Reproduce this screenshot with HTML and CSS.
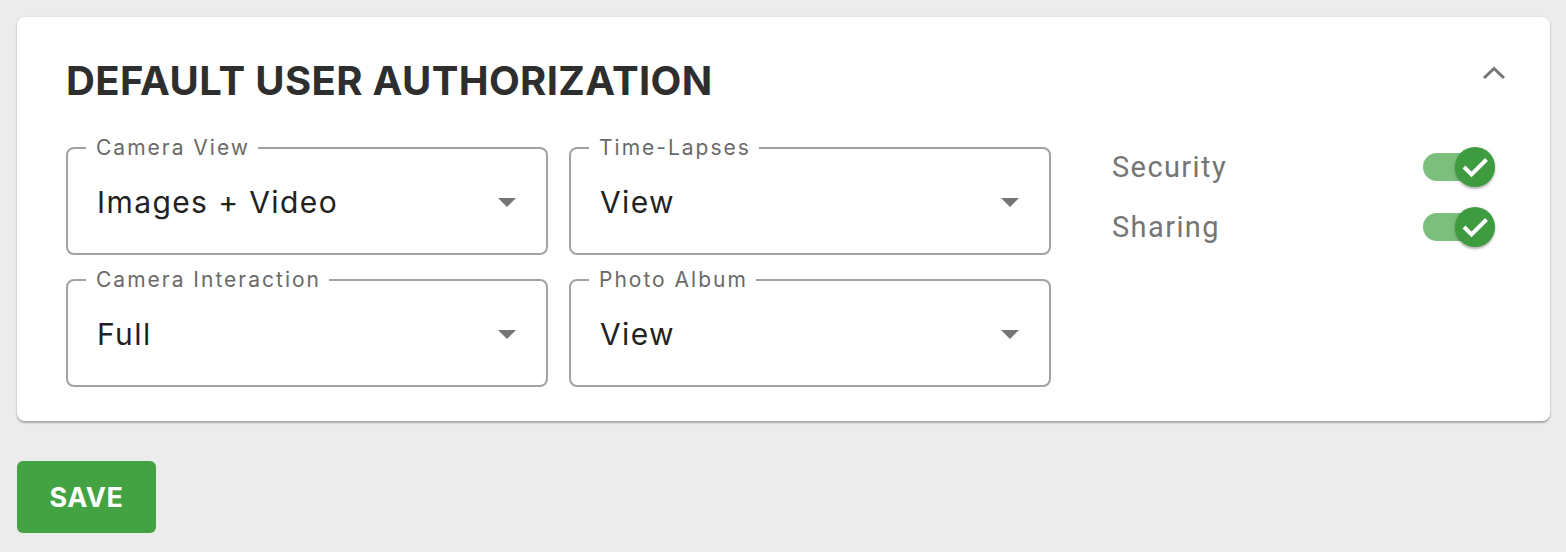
FILE: index.html
```html
<!DOCTYPE html>
<html lang="en">
<head>
<meta charset="utf-8">
<title>Default User Authorization</title>
<link rel="stylesheet" href="styles.css">
</head>
<body>
  <section class="card">
    <header class="card-header">
      <h1 class="card-title">DEFAULT USER AUTHORIZATION</h1>
      <button class="collapse-btn" aria-label="Collapse">
        <svg width="24" height="14" viewBox="0 0 24 14"><path d="M2 12 L12 2.5 L22 12" fill="none" stroke="#757575" stroke-width="3"/></svg>
      </button>
    </header>
    <div class="card-body">
      <div class="fields">
        <div class="field">
          <span class="field-label">Camera View</span>
          <span class="field-value">Images + Video</span>
          <span class="field-arrow"></span>
        </div>
        <div class="field">
          <span class="field-label">Time-Lapses</span>
          <span class="field-value">View</span>
          <span class="field-arrow"></span>
        </div>
        <div class="field">
          <span class="field-label">Camera Interaction</span>
          <span class="field-value">Full</span>
          <span class="field-arrow"></span>
        </div>
        <div class="field">
          <span class="field-label">Photo Album</span>
          <span class="field-value">View</span>
          <span class="field-arrow"></span>
        </div>
      </div>
      <div class="toggles">
        <div class="toggle-row">
          <span class="toggle-label">Security</span>
          <span class="switch">
            <span class="switch-track"></span>
            <span class="switch-thumb"><svg width="40" height="40" viewBox="0 0 40 40"><path d="M9 20 L16.5 27.5 L31.5 12.5" fill="none" stroke="#fff" stroke-width="4"/></svg></span>
          </span>
        </div>
        <div class="toggle-row">
          <span class="toggle-label">Sharing</span>
          <span class="switch">
            <span class="switch-track"></span>
            <span class="switch-thumb"><svg width="40" height="40" viewBox="0 0 40 40"><path d="M9 20 L16.5 27.5 L31.5 12.5" fill="none" stroke="#fff" stroke-width="4"/></svg></span>
          </span>
        </div>
      </div>
    </div>
  </section>
  <button class="save-btn">SAVE</button>
</body>
</html>
```

FILE: styles.css
```css
* { box-sizing: border-box; }

html, body {
  margin: 0;
  background: #ececec;
}

body {
  padding: 17px 16px 17px 17px;
  font-family: Inter, "Noto Sans", sans-serif;
}

.card {
  background: #fff;
  border-radius: 8px;
  box-shadow: 0 2px 2px rgba(0,0,0,0.28), 0 0 3px rgba(0,0,0,0.08);
  padding: 40px 44px 34px 49px;
}

.card-header {
  display: flex;
  justify-content: space-between;
  align-items: flex-start;
}

.card-title {
  margin: 0;
  font-size: 40px;
  line-height: 48px;
  font-weight: 700;
  color: #2e2e2e;
  letter-spacing: 0.35px;
}

.collapse-btn {
  margin-top: 9px;
  padding: 0;
  border: 0;
  background: none;
  display: block;
  width: 24px;
  height: 14px;
}

.collapse-btn svg { display: block; }

.card-body {
  display: flex;
  align-items: flex-start;
  margin-top: 42px;
}

.fields {
  display: grid;
  grid-template-columns: 482px 482px;
  column-gap: 21px;
  row-gap: 24px;
}

.field {
  position: relative;
  height: 108px;
  border: 2px solid #a2a2a2;
  border-radius: 8px;
  display: flex;
  align-items: center;
  padding: 2px 30px 0 29px;
}

.field-label {
  position: absolute;
  top: -13px;
  left: 18px;
  padding: 0 8px 0 10px;
  background: #fff;
  font-size: 21px;
  line-height: 24px;
  color: #6a6a6a;
  letter-spacing: 2px;
}

.field-value {
  flex: 1;
  font-size: 30px;
  color: #222;
  letter-spacing: 1.4px;
}

.field-arrow {
  width: 0;
  height: 0;
  border-left: 9.5px solid transparent;
  border-right: 9.5px solid transparent;
  border-top: 9.5px solid #757575;
}

.toggles {
  margin-left: 61px;
  width: 383px;
  display: flex;
  flex-direction: column;
  gap: 20px;
}

.toggle-row {
  display: flex;
  align-items: center;
  justify-content: space-between;
  height: 40px;
}

.toggle-label {
  font-family: Roboto, "Noto Sans", sans-serif;
  font-size: 29px;
  color: #757575;
  letter-spacing: 1.4px;
}

.switch {
  position: relative;
  width: 72px;
  height: 40px;
}

.switch-track {
  position: absolute;
  left: 0;
  top: 6px;
  width: 68px;
  height: 28px;
  border-radius: 14px;
  background: #7cbf7d;
}

.switch-thumb {
  position: absolute;
  left: 32px;
  top: 0;
  width: 40px;
  height: 40px;
  border-radius: 50%;
  background: #3e9b3f;
  box-shadow: 0 2px 2px rgba(0,0,0,0.22), 0 1px 4px rgba(0,0,0,0.12);
}

.switch-thumb svg { display: block; }

.save-btn {
  display: block;
  margin-top: 40px;
  width: 139px;
  height: 72px;
  border: 0;
  border-radius: 6px;
  background: #43a343;
  color: #fff;
  font-family: Inter, "Noto Sans", sans-serif;
  font-size: 27px;
  font-weight: 700;
  letter-spacing: 0.5px;
  padding: 0;
}
```
